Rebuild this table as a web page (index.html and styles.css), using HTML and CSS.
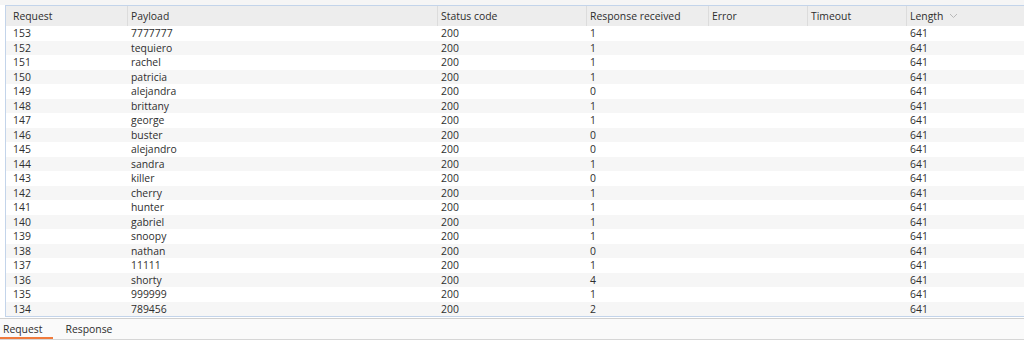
FILE: index.html
```html
<!DOCTYPE html>
<html>
<head>
<meta charset="utf-8">
<link rel="stylesheet" href="styles.css">
</head>
<body>
<div class="top-strip"></div>
<div class="table">
  <div class="row head">
    <div class="cell">Request</div>
    <div class="cell">Payload</div>
    <div class="cell">Status code</div>
    <div class="cell">Response received</div>
    <div class="cell">Error</div>
    <div class="cell">Timeout</div>
    <div class="cell">Length <svg class="chev" width="9" height="6" viewBox="0 0 9 6"><path d="M1 1 L4.5 4.5 L8 1" fill="none" stroke="#b8b8b8" stroke-width="1"/></svg></div>
  </div>
  <div class="body" id="rows"></div>
</div>
<div class="tabs">
  <div class="tab active">Request</div>
  <div class="tab">Response</div>
</div>
<script>
var data = [
[153,"7777777",1],[152,"tequiero",1],[151,"rachel",1],[150,"patricia",1],[149,"alejandra",0],
[148,"brittany",1],[147,"george",1],[146,"buster",0],[145,"alejandro",0],[144,"sandra",1],
[143,"killer",0],[142,"cherry",1],[141,"hunter",1],[140,"gabriel",1],[139,"snoopy",1],
[138,"nathan",0],[137,"11111",1],[136,"shorty",4],[135,"999999",1],[134,"789456",2]];
var html = "";
data.forEach(function(d, i){
  html += '<div class="row data' + (i % 2 ? ' alt' : '') + '">' +
    '<div class="cell">' + d[0] + '</div>' +
    '<div class="cell">' + d[1] + '</div>' +
    '<div class="cell">200</div>' +
    '<div class="cell">' + d[2] + '</div>' +
    '<div class="cell"></div>' +
    '<div class="cell"></div>' +
    '<div class="cell">641</div></div>';
});
document.getElementById("rows").innerHTML = html;
</script>
</body>
</html>
```

FILE: styles.css
```css
html, body {
  margin: 0;
  padding: 0;
  background: #ffffff;
  font-family: "Open Sans", "Noto Sans", sans-serif;
  font-size: 10.4px;
  color: #2e2e2e;
  overflow: hidden;
}
.top-strip {
  height: 5px;
  background: #f5f5f5;
}
.table {
  margin-left: 5px;
  border-top: 1px solid #c3d4ea;
  border-left: 1px solid #c3d4ea;
  border-bottom: 1px solid #c3d4ea;
}
.row {
  display: grid;
  grid-template-columns: 121px 310px 149px 122px 99px 99px 1fr;
}
.head {
  height: 20px;
  background: #ededed;
}
.head .cell {
  line-height: 20px;
}
.head .cell + .cell {
  border-left: 1px solid #dcdcdc;
  padding-left: 3px;
}
.cell {
  padding-left: 4px;
  white-space: nowrap;
  overflow: hidden;
}
.row .cell:first-child {
  padding-left: 7px;
}
.data {
  height: 14.5px;
  line-height: 14.5px;
  background: #ffffff;
}
.data.alt {
  background: #f6f6f6;
}
.chev {
  margin-left: 3px;
  vertical-align: 1px;
}
.tabs {
  margin-top: 1px;
  border-top: 1px solid #d0d0d0;
  border-bottom: 1px solid #d6d6d6;
  background: #fafafa;
  display: flex;
  height: 20px;
}
.tab {
  padding: 0 11px 0 3px;
  line-height: 20px;
  color: #2e2e2e;
}
.tab + .tab {
  padding-left: 12px;
}
.tab.active {
  box-shadow: inset 0 -2px 0 #f07a3c;
}
```
